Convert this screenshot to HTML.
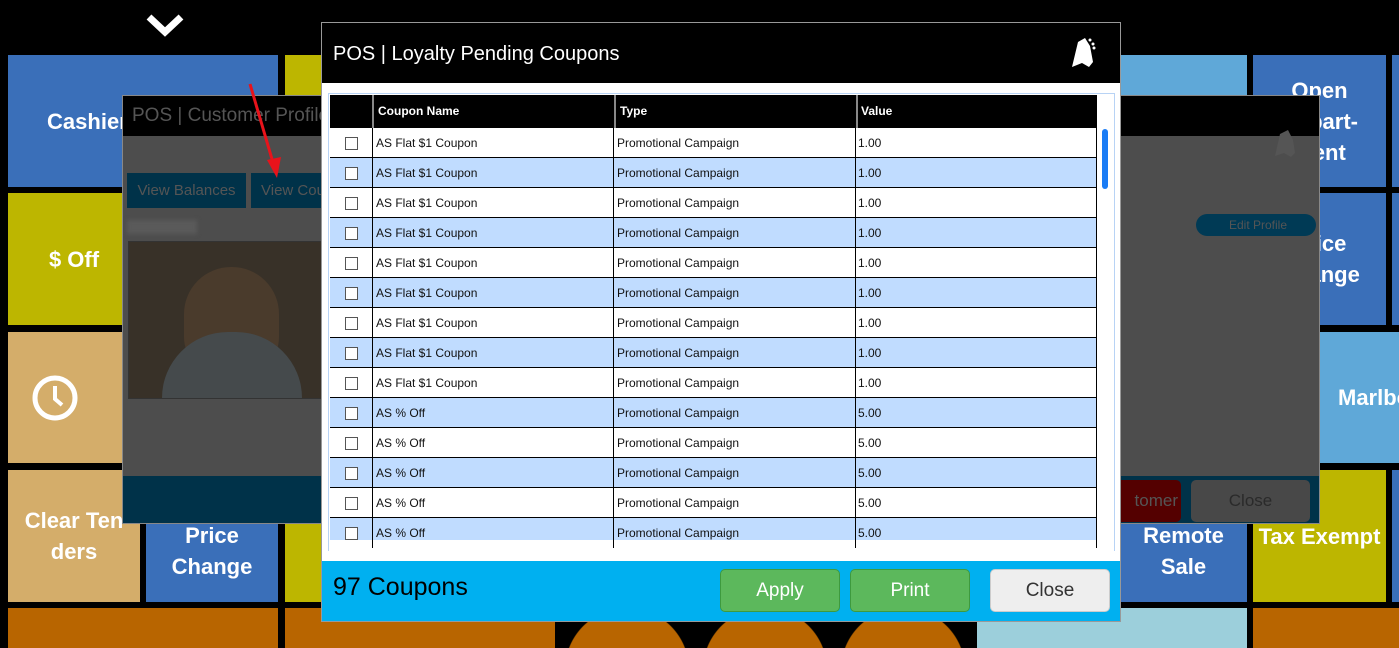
<!DOCTYPE html>
<html><head><meta charset="utf-8"><style>
*{margin:0;padding:0;box-sizing:border-box}
html{width:1399px;height:648px;overflow:hidden;background:#000}
body{width:1399px;height:648px;background:#000;position:relative;overflow:hidden;font-family:"Liberation Sans",sans-serif}
.t{position:absolute;color:#fff;font-weight:bold;font-size:22px;display:flex;align-items:center;justify-content:center;text-align:center;line-height:31px;overflow:hidden}
.a{position:absolute}
.row{position:absolute;left:330px;width:767px;height:30px;border-bottom:1px solid #000;font-size:12px;color:#111}
.row div{position:absolute;top:0;height:30px;line-height:30px}
.cb{position:absolute;left:15px;top:9px;width:13px;height:13px;border:1px solid #555;background:#fff}
.btn{position:absolute;top:569px;height:43px;border-radius:5px;font-size:19px;display:flex;align-items:center;justify-content:center}
.circ{position:absolute;top:608px;width:124px;height:40px;background:radial-gradient(circle 62px at 62px 62px,#b86500 61.5px,transparent 62.5px)}
</style></head><body>
<svg class="a" style="left:146px;top:12px" width="38" height="30" viewBox="0 0 38 30"><path d="M3 5 L19 20 L35 5" stroke="#fff" stroke-width="7" fill="none"/></svg>
<div class="t" style="left:8px;top:55px;width:270px;height:132px;background:#3a6fb9">Cashier Functions</div>
<div class="t" style="left:285px;top:55px;width:270px;height:132px;background:#bdb600"></div>
<div class="t" style="left:8px;top:193px;width:132px;height:132px;background:#bdb600">$ Off</div>
<div class="t" style="left:146px;top:193px;width:132px;height:132px;background:#bdb600"></div>
<div class="t" style="left:285px;top:193px;width:270px;height:132px;background:#3a6fb9"></div>
<div class="t" style="left:8px;top:332px;width:270px;height:131px;background:#d4ad6a"></div>
<svg class="a" style="left:31px;top:374px" width="48" height="48" viewBox="0 0 48 48"><circle cx="24" cy="24" r="20" stroke="#fff" stroke-width="5" fill="none"/><path d="M24 12 V25 L31 31" stroke="#fff" stroke-width="4" fill="none"/></svg>
<div class="t" style="left:8px;top:470px;width:132px;height:132px;background:#d4ad6a">Clear Ten<br>ders</div>
<div class="t" style="left:146px;top:470px;width:132px;height:132px;background:#3a6fb9;padding-top:30px">Price<br>Change</div>
<div class="t" style="left:285px;top:470px;width:270px;height:132px;background:#bdb600"></div>
<div class="a" style="left:8px;top:608px;width:270px;height:40px;background:#b86500"></div>
<div class="a" style="left:285px;top:608px;width:270px;height:40px;background:#b86500"></div>
<div class="circ" style="left:565px"></div>
<div class="circ" style="left:703px"></div>
<div class="circ" style="left:841px"></div>
<div class="a" style="left:977px;top:608px;width:270px;height:40px;background:#9ccfdb"></div>
<div class="a" style="left:1253px;top:608px;width:146px;height:40px;background:#b86500"></div>
<div class="t" style="left:1120px;top:55px;width:127px;height:132px;background:#5fa8d8"></div>
<div class="t" style="left:1253px;top:55px;width:133px;height:132px;background:#3a6fb9">Open<br>Depart-<br>ment</div>
<div class="t" style="left:1392px;top:55px;width:7px;height:132px;background:#3a6fb9"></div>
<div class="t" style="left:1120px;top:193px;width:127px;height:132px;background:#3a6fb9"></div>
<div class="t" style="left:1253px;top:193px;width:133px;height:132px;background:#3a6fb9">Price<br>Change</div>
<div class="t" style="left:1392px;top:193px;width:7px;height:132px;background:#3a6fb9"></div>
<div class="t" style="left:1120px;top:332px;width:279px;height:131px;background:#5fa8d8;justify-content:flex-start;padding-left:218px;white-space:nowrap">Marlboro</div>
<div class="t" style="left:1120px;top:470px;width:127px;height:132px;background:#3a6fb9;padding-top:30px">Remote<br>Sale</div>
<div class="t" style="left:1253px;top:470px;width:133px;height:132px;background:#bdb600">Tax Exempt</div>
<div class="t" style="left:1392px;top:470px;width:7px;height:132px;background:#3a6fb9"></div>
<!-- profile modal -->
<div class="a" style="left:122px;top:95px;width:1198px;height:429px;background:#4d4d4d;border:1px solid #888;overflow:hidden">
 <div class="a" style="left:0;top:0;width:100%;height:40px;background:#000;color:#555;font-size:19px;line-height:40px;padding-left:9px">POS | Customer Profile</div>
 <div class="a" style="left:4px;top:77px;width:119px;height:35px;background:#003249;color:#555;font-size:15px;line-height:35px;text-align:center">View Balances</div>
 <div class="a" style="left:128px;top:77px;width:200px;height:35px;background:#003249;color:#555;font-size:15px;line-height:35px;padding-left:10px">View Coupons</div>
 <div class="a" style="left:4px;top:124px;width:70px;height:14px;background:#5a5a5a;filter:blur(2px)"></div>
 <div class="a" style="left:5px;top:145px;width:310px;height:158px;background:#383128;border:1px solid #333;overflow:hidden">
  <div class="a" style="left:55px;top:25px;width:95px;height:110px;border-radius:47px 47px 40px 40px;background:#4a3b2c"></div>
  <div class="a" style="left:33px;top:90px;width:140px;height:66px;border-radius:70px 70px 0 0;background:#454a4c"></div>
 </div>
 <div class="a" style="left:0;top:380px;width:100%;height:47px;background:#003249"></div>
 <div class="a" style="left:1073px;top:118px;width:120px;height:22px;border-radius:11px;background:#003a55;color:#555;font-size:12px;line-height:22px;padding-left:33px">Edit Profile</div>
 <div class="a" style="left:990px;top:384px;width:68px;height:42px;border-radius:5px;background:#540000;color:#555;font-size:17px;line-height:42px;text-align:right;padding-right:3px">tomer</div>
 <div class="a" style="left:1068px;top:384px;width:119px;height:42px;border-radius:5px;background:#484848;color:#2a2a2a;font-size:17px;line-height:42px;text-align:center">Close</div>
 <svg class="a" style="left:1148px;top:30px" width="30" height="34" viewBox="0 0 30 34"><path d="M4 30 L9 8 L17 4 L22 14 L24 27 L20 31 L13 27 Z" fill="#555"/></svg>
</div>
<svg class="a" style="left:240px;top:80px" width="50" height="100" viewBox="0 0 50 100"><path d="M10 4 L34 86" stroke="#e8131b" stroke-width="3"/><path d="M27 80 L37 98 L41 77 Z" fill="#e8131b"/></svg>
<!-- main modal -->
<div class="a" style="left:321px;top:22px;width:800px;height:600px;background:#fff;border:1px solid #999"></div>
<div class="a" style="left:322px;top:23px;width:798px;height:60px;background:#000;color:#fff;font-size:20px;line-height:62px;padding-left:11px">POS | Loyalty Pending Coupons</div>
<svg class="a" style="left:1068px;top:34px" width="34" height="36" viewBox="0 0 34 36"><path d="M4 33 L10 8 L17 4 L22 12 L25 28 L21 33 L14 29 Z" fill="#fff"/><circle cx="22" cy="6" r="1.5" fill="#fff"/><circle cx="25" cy="10" r="1.5" fill="#fff"/><circle cx="26" cy="14" r="1.5" fill="#fff"/></svg>
<div class="a" style="left:328px;top:93px;width:787px;height:458px;border:1px solid #b8d3f5;border-bottom:none"></div>
<div class="a" style="left:330px;top:95px;width:767px;height:33px;background:#000;color:#fff;font-size:12px;font-weight:bold;line-height:33px">
 <div class="a" style="left:42px;top:0;height:33px;border-left:2px solid #888;padding-left:4px;width:242px">Coupon Name</div>
 <div class="a" style="left:284px;top:0;height:33px;border-left:2px solid #888;padding-left:4px;width:242px">Type</div>
 <div class="a" style="left:526px;top:0;height:33px;border-left:2px solid #888;padding-left:3px;width:241px">Value</div>
</div>
<div id="rows"></div>
<script>
var h='';for(var i=0;i<14;i++){var n=i<9?'AS Flat $1 Coupon':'AS % Off',v=i<9?'1.00':'5.00',bg=i%2?'#c0dcff':'#fff';
h+='<div class="row" style="top:'+(128+i*30)+'px;background:'+bg+(i==13?';height:22px;border-bottom:none':'')+'"><span class="cb"></span><div style="left:42px;border-left:1px solid #000;padding-left:3px;width:242px">'+n+'</div><div style="left:283px;border-left:1px solid #000;padding-left:3px;width:242px">Promotional Campaign</div><div style="left:525px;border-left:1px solid #000;border-right:1px solid #000;padding-left:2px;width:242px">'+v+'</div></div>';}
document.getElementById('rows').innerHTML=h;
</script>
<div class="a" style="left:1102px;top:129px;width:6px;height:60px;border-radius:3px;background:#1a7cf5"></div>
<div class="a" style="left:322px;top:561px;width:798px;height:60px;background:#00b0f0;color:#000;font-size:25px;line-height:52px;padding-left:11px">97 Coupons</div>
<div class="btn" style="left:720px;width:120px;background:#5cb85c;border:1px solid #3e9a3e;color:#fff">Apply</div>
<div class="btn" style="left:850px;width:120px;background:#5cb85c;border:1px solid #3e9a3e;color:#fff">Print</div>
<div class="btn" style="left:990px;width:120px;background:#eee;border:1px solid #ccc;color:#333">Close</div>
</body></html>
